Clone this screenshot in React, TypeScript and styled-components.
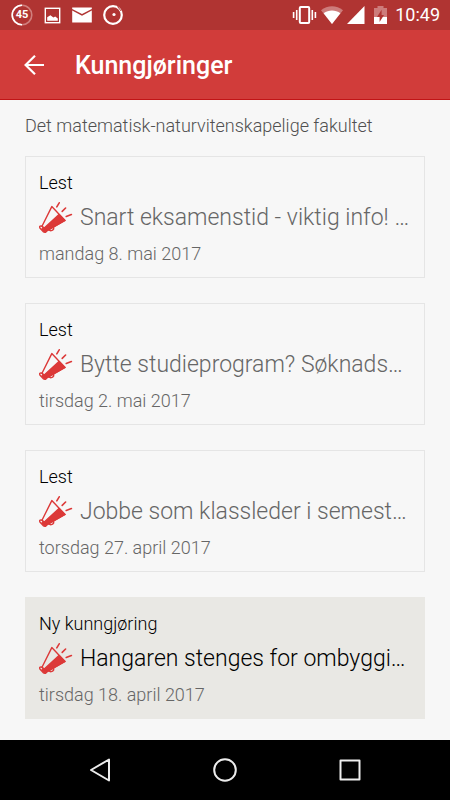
import React from "react";
import styled, { createGlobalStyle } from "styled-components";

const GlobalStyle = createGlobalStyle`
  * { box-sizing: border-box; }
  body {
    margin: 0;
    background: #f7f7f7;
    font-family: Roboto, "Noto Sans", sans-serif;
  }
  svg { display: block; flex: none; }
`;

const Screen = styled.div`
  display: flex;
  flex-direction: column;
  min-height: 100vh;
`;

const StatusBar = styled.div`
  display: flex;
  align-items: center;
  justify-content: space-between;
  height: 30px;
  padding: 0 10px 0 11px;
  background: #b03432;
  color: #fff;
`;

const StatusGroup = styled.div<{ $gap: number }>`
  display: flex;
  align-items: center;
  gap: ${(p) => p.$gap}px;
`;

const Clock = styled.time`
  font-size: 18px;
  line-height: 30px;
`;

const BatteryRing = styled.span`
  display: grid;
  place-items: center;
  font-size: 11px;
  font-weight: 700;
  line-height: 22px;

  > * { grid-area: 1 / 1; }
`;

const AppBar = styled.header`
  display: flex;
  align-items: center;
  gap: 27px;
  height: 70px;
  padding: 2px 20px 0;
  background: #d13c3a;
  border-bottom: 1px solid #c11416;
`;

const BackButton = styled.button`
  padding: 0;
  border: 0;
  background: none;
  cursor: pointer;
`;

const AppTitle = styled.h1`
  margin: 0;
  color: #fff;
  font-size: 25px;
  font-weight: 500;
  line-height: 32px;
`;

const Content = styled.main`
  flex: 1;
  padding: 14px 25px 20px;
`;

const Faculty = styled.h2`
  margin: 0 0 18px;
  color: #505050;
  font-size: 18px;
  font-weight: 350;
  line-height: 24px;
`;

const CardList = styled.div`
  display: flex;
  flex-direction: column;
  gap: 25px;
`;

const Card = styled.a<{ $unread?: boolean }>`
  display: block;
  padding: 14px 13px 11px;
  border: 1px solid ${(p) => (p.$unread ? "#e9e8e4" : "#e5e5e5")};
  background: ${(p) => (p.$unread ? "#e9e8e4" : "#f7f7f7")};
  color: #000;
  text-decoration: none;
`;

const CardStatus = styled.div`
  font-size: 18px;
  font-weight: 350;
  line-height: 24px;
`;

const CardHeading = styled.div`
  display: flex;
  align-items: center;
  gap: 7px;
  margin: 5px 0 6px;
`;

const CardTitle = styled.h3<{ $unread?: boolean }>`
  min-width: 0;
  margin: 0;
  overflow: hidden;
  color: ${(p) => (p.$unread ? "#000" : "#666")};
  font-size: 23px;
  font-weight: 350;
  line-height: 36px;
  text-overflow: ellipsis;
  white-space: nowrap;
`;

const CardDate = styled.time`
  display: block;
  color: #666;
  font-size: 18px;
  font-weight: 350;
  line-height: 24px;
`;

const NavBar = styled.nav`
  display: flex;
  justify-content: center;
  height: 60px;
  background: #000;
`;

const NavButton = styled.button`
  display: grid;
  place-items: center;
  width: 125px;
  padding: 0;
  border: 0;
  background: none;
  cursor: pointer;
`;

const Megaphone = () => (
  <svg width="34" height="34" viewBox="0 0 34 34" fill="none" stroke="#dc3938" strokeWidth="1.4" strokeLinecap="round" strokeLinejoin="round" aria-hidden="true">
    <path d="M12.8 5.6 26 19.4 7.6 29.8 3 25.2Z" />
    <path d="M20 13.6 26 19.4 7.6 29.8 5 27.2Z" fill="#dc3938" />
    <path d="M3 25.2C1 24.6.2 25.6.9 27L4.6 31C5.8 31.8 7.6 31.2 7.6 29.8Z" />
    <path d="M3 27.8 5.2 30.6 7.6 29.8 5 27.2Z" fill="#dc3938" />
    <path d="M9.8 28.6C11 30.4 13.6 29.8 14.6 28.2 15 27.2 14.6 26.4 14 25.8" />
    <path d="M20.2 1.8 17.8 5.8M26.6 7 23.2 10.4M32.4 13.6 27.2 15.5" strokeWidth="1.6" />
  </svg>
);

const announcements = [
  { status: "Lest", title: "Snart eksamenstid - viktig info! …", date: "mandag 8. mai 2017", iso: "2017-05-08" },
  { status: "Lest", title: "Bytte studieprogram? Søknads…", date: "tirsdag 2. mai 2017", iso: "2017-05-02" },
  { status: "Lest", title: "Jobbe som klassleder i semest…", date: "torsdag 27. april 2017", iso: "2017-04-27" },
  { status: "Ny kunngjøring", title: "Hangaren stenges for ombyggi…", date: "tirsdag 18. april 2017", iso: "2017-04-18", unread: true },
];

export default function App() {
  return (
    <Screen>
      <GlobalStyle />
      <StatusBar>
        <StatusGroup $gap={11}>
          <BatteryRing>
            <svg width="22" height="22" viewBox="0 0 22 22" fill="none" strokeWidth="1.6">
              <circle cx="11" cy="11" r="9.8" stroke="#d07f7d" />
              <path d="M11 20.8A9.8 9.8 0 0 1 11 1.2" stroke="#fff" />
            </svg>
            <span>45</span>
          </BatteryRing>
          <svg width="17" height="17" viewBox="0 0 17 17">
            <rect x="1.3" y="1.3" width="14.4" height="14.4" fill="none" stroke="#fff" strokeWidth="1.4" />
            <path d="M3.2 13.8V10.2L6.4 8.2 9.4 10.6 11.2 9.4 13.8 11.4V13.8Z" fill="#fff" />
          </svg>
          <svg width="20" height="16" viewBox="0 0 20 16" fill="#fff">
            <path d="M.2.5H19.8V2L10 7 .2 2ZM.2 3.6 10 8.8 19.8 3.6V15.5H.2Z" />
          </svg>
          <svg width="20" height="22" viewBox="0 0 20 22">
            <circle cx="10" cy="11" r="8.8" fill="none" stroke="#fff" strokeWidth="2.2" />
            <circle cx="11" cy="10.5" r="1.6" fill="#fff" />
            <path d="M14.5 2.5 18.2 7" stroke="#b03432" strokeWidth="1" />
          </svg>
        </StatusGroup>
        <StatusGroup $gap={3}>
          <svg width="25" height="20" viewBox="0 0 25 20" fill="none" stroke="#fff">
            <rect x="7.8" y="2.1" width="9.4" height="15.8" rx="1" strokeWidth="2" />
            <path d="M4.7 5V15M20.3 5V15M1.6 7V13M23.4 7V13" strokeWidth="1.6" />
          </svg>
          <svg width="24" height="20" viewBox="0 0 24 20">
            <path d="M12 19 1 5.2C7.5-.1 16.5-.1 23 5.2Z" fill="#cd7c7b" />
            <path d="M12 19 3.6 8.2C8.6 4.5 15.4 4.5 20.4 8.2Z" fill="#fff" />
          </svg>
          <svg width="18" height="20" viewBox="0 0 18 20">
            <path d="M17.5 1V19H0Z" fill="#fff" />
          </svg>
          <svg width="24" height="20" viewBox="0 0 24 20">
            <path d="M9.5 1H15.5V3H19V12H6V3H9.5Z" fill="#cd7c7b" />
            <path d="M6 12H19V19H6Z" fill="#fff" />
            <path d="M13.6 4.8V10H16L11.6 17V12H9Z" fill="#b03432" />
          </svg>
          <Clock>10:49</Clock>
        </StatusGroup>
      </StatusBar>
      <AppBar>
        <BackButton type="button" aria-label="Tilbake">
          <svg width="28" height="28" viewBox="0 0 28 28" fill="none" stroke="#fff" strokeWidth="2.2">
            <path d="M24 13H5.5M15 3.8 5.6 13 15 22.2" />
          </svg>
        </BackButton>
        <AppTitle>Kunngjøringer</AppTitle>
      </AppBar>
      <Content>
        <Faculty>Det matematisk-naturvitenskapelige fakultet</Faculty>
        <CardList>
          {announcements.map((item) => (
            <Card key={item.iso} href={`#${item.iso}`} $unread={item.unread}>
              <CardStatus>{item.status}</CardStatus>
              <CardHeading>
                <Megaphone />
                <CardTitle $unread={item.unread}>{item.title}</CardTitle>
              </CardHeading>
              <CardDate dateTime={item.iso}>{item.date}</CardDate>
            </Card>
          ))}
        </CardList>
      </Content>
      <NavBar aria-label="System">
        <NavButton type="button" aria-label="Tilbake">
          <svg width="26" height="26" viewBox="0 0 26 26" fill="none" stroke="#ececec" strokeWidth="2" strokeLinejoin="round">
            <path d="M22 2.5V23.5L4 13Z" />
          </svg>
        </NavButton>
        <NavButton type="button" aria-label="Hjem">
          <svg width="26" height="26" viewBox="0 0 26 26" fill="none" stroke="#ececec" strokeWidth="2">
            <circle cx="13" cy="13" r="10.8" />
          </svg>
        </NavButton>
        <NavButton type="button" aria-label="Oversikt">
          <svg width="26" height="26" viewBox="0 0 26 26" fill="none" stroke="#ececec" strokeWidth="2" strokeLinejoin="round">
            <rect x="3.5" y="3.5" width="19" height="19" />
          </svg>
        </NavButton>
      </NavBar>
    </Screen>
  );
}
